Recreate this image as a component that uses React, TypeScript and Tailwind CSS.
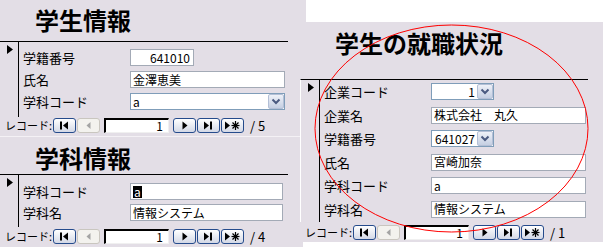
import type { ReactNode } from "react";

// Access-style form: two subforms on the left, one on the right with a red ellipse over it.

function Arrow() {
    return (
        <svg width="6" height="9" viewBox="0 0 6 9" className="block">
            <polygon points="0,0 6,4.5 0,9" fill="#000" />
        </svg>
    );
}

function TextBox({ children, width = "w-[155px]" }: { children?: ReactNode; width?: string }) {
    return (
        <div className={`${width} flex h-[17px] items-center whitespace-nowrap border border-[#a3aab6] bg-white px-[2px] text-[12px] leading-none`}>
            {children}
        </div>
    );
}

function DropButton() {
    return (
        <div className="flex h-[15px] w-[16px] shrink-0 items-center justify-center rounded-[2px] border border-[#b3bfd6] bg-gradient-to-b from-[#eef1f8] to-[#c5cfe2]">
            <svg width="10" height="7" viewBox="0 0 10 7">
                <path d="M1.5 1.5 L5 5 L8.5 1.5" stroke="#4a5a80" strokeWidth="2" fill="none" />
            </svg>
        </div>
    );
}

function Combo({ value, width, right }: { value: string; width: string; right?: boolean }) {
    return (
        <div className={`${width} flex h-[17px] items-center border border-[#7f9db9] bg-white pl-[2px] text-[12px] leading-none`}>
            <span className={`flex-1 ${right ? "pr-[2px] text-right" : ""}`}>{value}</span>
            <DropButton />
        </div>
    );
}

function Field({ label, children }: { label: string; children: ReactNode }) {
    return (
        <div className="flex h-[17px] items-center">
            <span className="w-[107px] shrink-0 whitespace-nowrap text-[13px] leading-none">{label}</span>
            {children}
        </div>
    );
}

type Glyph = "first" | "prev" | "next" | "last" | "new";

function NavIcon({ glyph }: { glyph: Glyph }) {
    return (
        <svg width="21" height="13" viewBox="0 0 21 13">
            {glyph === "first" && (
                <>
                    <rect x="6" y="2.5" width="2" height="8" fill="#000" />
                    <polygon points="14,2.5 9,6.5 14,10.5" fill="#000" />
                </>
            )}
            {glyph === "prev" && <polygon points="12.5,3 8.5,6.5 12.5,10" fill="#a4a4a4" />}
            {glyph === "next" && <polygon points="8.5,2.5 13.5,6.5 8.5,10.5" fill="#000" />}
            {glyph === "last" && (
                <>
                    <polygon points="6,2.5 11,6.5 6,10.5" fill="#000" />
                    <rect x="12" y="2.5" width="2" height="8" fill="#000" />
                </>
            )}
            {glyph === "new" && (
                <>
                    <polygon points="3,2.5 8,6.5 3,10.5" fill="#000" />
                    <g stroke="#000" strokeWidth="1.2">
                        <line x1="13.5" y1="2" x2="13.5" y2="11" />
                        <line x1="9.5" y1="6.5" x2="17.5" y2="6.5" />
                        <line x1="10.5" y1="3.5" x2="16.5" y2="9.5" />
                        <line x1="16.5" y1="3.5" x2="10.5" y2="9.5" />
                    </g>
                </>
            )}
        </svg>
    );
}

function NavButton({ glyph, className = "" }: { glyph: Glyph; className?: string }) {
    const disabled = glyph === "prev";
    return (
        <div
            className={`flex h-[15px] w-[23px] shrink-0 items-center justify-center rounded-[3px] border ${
                disabled
                    ? "border-[#c9c6bf] bg-[#f3f2ee]"
                    : "border-[#254b8c] bg-gradient-to-b from-white to-[#d3d8e6]"
            } ${className}`}
        >
            <NavIcon glyph={glyph} />
        </div>
    );
}

function RecordNav({ total }: { total: number }) {
    return (
        <div className="flex items-center whitespace-nowrap pl-[5px]">
            <span className="w-[48px] shrink-0 text-[11px] leading-none">レコード:</span>
            <NavButton glyph="first" />
            <NavButton glyph="prev" className="ml-[1px]" />
            <div className="ml-[4px] flex h-[15px] w-[65px] shrink-0 items-center justify-end border-l-2 border-t-2 border-b border-r border-l-black border-t-black border-b-[#f0f0f0] border-r-[#f0f0f0] bg-white pr-[5px] text-[12px] leading-none">
                1
            </div>
            <NavButton glyph="next" className="ml-[4px]" />
            <NavButton glyph="last" className="ml-[1px]" />
            <NavButton glyph="new" className="ml-[1px]" />
            <span className="ml-[6px] text-[13px] leading-none">/ {total}</span>
        </div>
    );
}

function Detail({ height, pad, gap, children, edge }: { height: string; pad: string; gap: string; children: ReactNode; edge?: boolean }) {
    return (
        <div className={`flex w-[288px] border-t border-black ${height} ${edge ? "border-l border-l-white" : ""}`}>
            <div className="w-[19px] shrink-0 border-r border-black pl-[7px] pt-[3px]">
                <Arrow />
            </div>
            <div className={`flex flex-col pl-[4px] ${pad} ${gap}`}>{children}</div>
        </div>
    );
}

export default function App() {
    return (
        <div className="relative flex h-[247px] w-[603px] overflow-hidden bg-[#e3dee6] font-['Noto_Sans_CJK_JP',sans-serif] text-black">
            {/* Left column: 学生情報 + 学科情報 */}
            <div className="flex w-[300px] shrink-0 flex-col">
                <div className="h-[136px]">
                    <div className="h-[41px] pl-[35px] pt-[8px] text-[24px] font-bold leading-[24px]">学生情報</div>
                    <Detail height="h-[76px]" pad="pt-[7px]" gap="gap-[5px]">
                        <Field label="学籍番号">
                            <TextBox width="w-[64px]">
                                <span className="w-full pr-[1px] text-right">641010</span>
                            </TextBox>
                        </Field>
                        <Field label="氏名">
                            <TextBox>金澤恵美</TextBox>
                        </Field>
                        <Field label="学科コード">
                            <Combo value="a" width="w-[155px]" />
                        </Field>
                    </Detail>
                    <div className="pt-[1px]">
                        <RecordNav total={5} />
                    </div>
                </div>
                <div className="h-px bg-[#f4f1f5]" />
                <div className="flex-1">
                    <div className="h-[37px] pl-[35px] pt-[9px] text-[24px] font-bold leading-[24px]">学科情報</div>
                    <Detail height="h-[53px]" pad="pt-[8px]" gap="gap-[4px]">
                        <Field label="学科コード">
                            <TextBox width="w-[153px]">
                                <span className="bg-black px-[1px] text-white">a</span>
                            </TextBox>
                        </Field>
                        <Field label="学科名">
                            <TextBox width="w-[153px]">情報システム</TextBox>
                        </Field>
                    </Detail>
                    <div className="pt-[2px]">
                        <RecordNav total={4} />
                    </div>
                </div>
            </div>

            {/* Right column: 学生の就職状況 */}
            <div className="flex flex-1 flex-col">
                <div className="ml-[6px] h-[22px] bg-white" />
                <div className="h-[57px] pl-[35px] pt-[9px] text-[24px] font-bold leading-[24px]">学生の就職状況</div>
                <Detail height="h-[143px]" pad="pt-[3px]" gap="gap-[6.6px]" edge>
                    <Field label="企業コード">
                        <Combo value="1" width="w-[63px]" right />
                    </Field>
                    <Field label="企業名">
                        <TextBox>株式会社　丸久</TextBox>
                    </Field>
                    <Field label="学籍番号">
                        <Combo value="641027" width="w-[63px]" right />
                    </Field>
                    <Field label="氏名">
                        <TextBox>宮崎加奈</TextBox>
                    </Field>
                    <Field label="学科コード">
                        <TextBox>a</TextBox>
                    </Field>
                    <Field label="学科名">
                        <TextBox>情報システム</TextBox>
                    </Field>
                </Detail>
                <div className="h-[20px] pt-[3px]">
                    <RecordNav total={1} />
                </div>
                <div className="ml-[3px] flex-1 bg-white" />
            </div>

            {/* Hand-drawn red ellipse over the right form */}
            <svg className="pointer-events-none absolute left-0 top-0" width="603" height="247">
                <ellipse cx="451.5" cy="128.5" rx="136.5" ry="103.5" fill="none" stroke="#ff0000" strokeWidth="1" />
            </svg>
        </div>
    );
}
